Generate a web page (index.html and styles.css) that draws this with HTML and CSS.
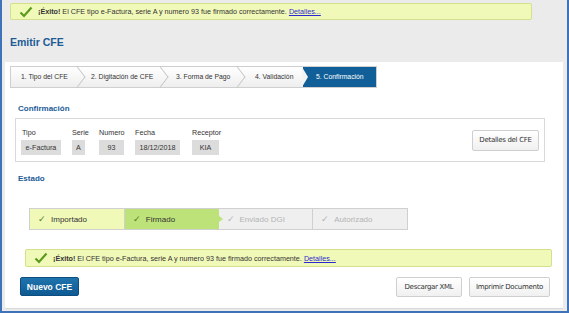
FILE: index.html
```html
<!DOCTYPE html>
<html lang="es">
<head>
    <meta charset="UTF-8">
    <title>Emitir CFE</title>
    <link rel="stylesheet" href="styles.css">
</head>
<body>
    <div class="frame">
        <div class="alert alert-top">
            <svg class="ok" width="14" height="12" viewBox="0 0 14 12"><polyline points="1.5,6.5 5,10 12.5,1.5" /></svg>
            <span><b>¡Éxito!</b> El CFE tipo e-Factura, serie A y numero 93 fue firmado correctamente. <a href="#">Detalles...</a></span>
        </div>
        <h1 class="title">Emitir CFE</h1>
        <div class="panel">
            <ul class="wizard">
                <li>1. Tipo del CFE</li>
                <li>2. Digitación de CFE</li>
                <li>3. Forma de Pago</li>
                <li>4. Validación</li>
                <li class="active">5. Confirmación</li>
            </ul>

            <h2 class="section">Confirmación</h2>
            <div class="summary">
                <div class="fields">
                    <div class="field f-tipo"><label>Tipo</label><span>e-Factura</span></div>
                    <div class="field f-serie"><label>Serie</label><span>A</span></div>
                    <div class="field f-num"><label>Numero</label><span>93</span></div>
                    <div class="field f-fecha"><label>Fecha</label><span>18/12/2018</span></div>
                    <div class="field f-rec"><label>Receptor</label><span>KIA</span></div>
                </div>
                <button class="btn">Detalles del CFE</button>
            </div>

            <h2 class="section section-estado">Estado</h2>
            <div class="status">
                <div class="step done"><i>&#10003;</i>Importado</div>
                <div class="step current"><i>&#10003;</i>Firmado</div>
                <div class="step todo"><i>&#10003;</i>Enviado DGI</div>
                <div class="step todo"><i>&#10003;</i>Autorizado</div>
            </div>

            <div class="alert alert-bottom">
                <svg class="ok" width="14" height="12" viewBox="0 0 14 12"><polyline points="1.5,6.5 5,10 12.5,1.5" /></svg>
                <span><b>¡Éxito!</b> El CFE tipo e-Factura, serie A y numero 93 fue firmado correctamente. <a href="#">Detalles...</a></span>
            </div>

            <div class="actions">
                <button class="btn btn-primary">Nuevo CFE</button>
                <div class="right">
                    <button class="btn">Descargar XML</button>
                    <button class="btn">Imprimir Documento</button>
                </div>
            </div>
        </div>
    </div>
</body>
</html>
```

FILE: styles.css
```css
html, body {
    margin: 0;
    padding: 0;
}
body {
    background: #ffffff;
    font-family: "Liberation Sans", Arial, sans-serif;
    font-size: 7.2px;
    color: #333;
}
.frame {
    box-sizing: border-box;
    width: 569px;
    height: 313px;
    border: 2px solid #3f72b8;
    border-top: none;
    background: #ebebeb;
    overflow: hidden;
    padding-top: 3px;
}
.alert {
    display: flex;
    align-items: center;
    gap: 5px;
    background: #f1f9b9;
    border: 1px solid #d4e08c;
    border-radius: 2px;
    height: 16px;
    padding: 0 8px;
    box-sizing: border-box;
}
.alert-top {
    margin-left: 8px;
    width: 522px;
    height: 17px;
}
.alert a {
    color: #2a2ad0;
}
.ok polyline {
    fill: none;
    stroke: #5b9a1d;
    stroke-width: 2.2;
}
.title {
    margin: 16px 0 0 8px;
    font-size: 10.5px;
    color: #1d5b97;
    font-weight: bold;
    height: 26px;
}
.panel {
    background: #fff;
    margin: 0 4px 0 3px;
    padding: 4px 10px 0 5px;
    height: 242px;
    border-bottom: 1px solid #d8d8d8;
}
.wizard {
    list-style: none;
    margin: 0;
    padding: 0;
    display: flex;
    width: 365px;
    height: 20px;
    border: 1px solid #cfcfcf;
    background: linear-gradient(#ffffff, #eeeeee);
    font-size: 6.8px;
}
.wizard li {
    position: relative;
    box-sizing: border-box;
    line-height: 20px;
    color: #333;
    white-space: nowrap;
}
.wizard li:nth-child(1) { width: 69px; padding-left: 10px; }
.wizard li:nth-child(2) { width: 83px; padding-left: 11px; }
.wizard li:nth-child(3) { width: 77px; padding-left: 13px; }
.wizard li:nth-child(4) { width: 63px; padding-left: 15px; }
.wizard li::after {
    content: "";
    position: absolute;
    right: -4px;
    top: 3px;
    width: 13px;
    height: 13px;
    border-top: 1px solid #c8c8c8;
    border-right: 1px solid #c8c8c8;
    transform: rotate(45deg) skew(8deg, 8deg);
}
.wizard li.active {
    flex: 1;
    background: #105f98;
    color: #fff;
    padding-left: 13px;
}
.wizard li.active::after,
.wizard li:nth-child(4)::after {
    display: none;
}
.wizard li.active::before {
    content: "";
    position: absolute;
    left: -1px;
    top: 0;
    border-style: solid;
    border-width: 10px 0 10px 6px;
    border-color: transparent transparent transparent #f3f3f3;
}
.section {
    margin: 0;
    font-size: 8px;
    font-weight: bold;
    color: #1d5b97;
    padding: 16px 0 0 8px;
    height: 14px;
}
.summary {
    margin-left: 5px;
    width: 530px;
    height: 44px;
    border: 1px solid #d9d9d9;
    display: flex;
    justify-content: space-between;
    align-items: center;
    padding: 0 5px;
    box-sizing: border-box;
}
.fields {
    display: flex;
    padding-top: 3px;
}
.field {
    display: flex;
    flex-direction: column;
    gap: 3px;
}
.field label {
    height: 9px;
}
.field span {
    background: #dcdcdc;
    height: 15px;
    line-height: 15px;
    text-align: center;
    color: #333;
}
.f-tipo { width: 40px; margin-right: 11px; }
.f-tipo label { padding-left: 1px; }
.f-serie { width: 13px; margin-right: 14px; }
.f-num { width: 25px; margin-right: 11px; }
.f-fecha { width: 45px; margin-right: 12px; }
.f-rec { width: 27px; }
.btn {
    font-family: "DejaVu Sans", Verdana, sans-serif;
    font-size: 7px;
    letter-spacing: -0.3px;
    color: #333;
    background: linear-gradient(#ffffff, #f0f0f0);
    border: 1px solid #cfcfcf;
    border-radius: 2px;
    height: 21px;
    padding: 0 8px;
    cursor: pointer;
}
.summary .btn {
    width: 67px;
    padding: 0;
}
.section-estado {
    padding-top: 12px;
}
.status {
    display: flex;
    margin: 20px 0 0 19px;
    width: 379px;
    height: 22px;
    border: 1px solid #d0d0d0;
    box-sizing: border-box;
    font-size: 8px;
}
.step {
    flex: 1;
    line-height: 20px;
    padding-left: 8px;
    position: relative;
    border-right: 1px solid #d0d0d0;
}
.step i {
    font-style: normal;
    font-size: 9px;
    color: #4f7d1c;
    margin-right: 5px;
}
.step:last-child {
    border-right: none;
}
.step.done {
    background: #f1f9b9;
    color: #333;
}
.step.current {
    background: #bde27a;
    color: #333;
    border-right: none;
}
.step.current::after {
    content: "";
    position: absolute;
    right: -4px;
    top: 7px;
    border-style: solid;
    border-width: 3px 0 3px 4px;
    border-color: transparent transparent transparent #bde27a;
    z-index: 1;
}
.step.todo {
    background: #efefef;
    color: #b4b4b4;
}
.step.todo i {
    color: #b4b4b4;
}
.alert-bottom {
    margin: 19px 0 0 15px;
    width: 527px;
    height: 18px;
}
.actions {
    display: flex;
    justify-content: space-between;
    align-items: flex-start;
    margin: 10px 0 0 10px;
    width: 530px;
}
.btn-primary {
    font-family: "Liberation Sans", Arial, sans-serif;
    font-size: 8.5px;
    font-weight: bold;
    letter-spacing: 0;
    color: #fff;
    background: linear-gradient(#1f73ad, #0f5a92);
    border: 1px solid #0d4e80;
    width: 59px;
    height: 19px;
    padding: 0;
}
.right {
    display: flex;
    gap: 7px;
}
.right .btn {
    height: 20px;
}
.right .btn:first-child { width: 66px; padding: 0; }
.right .btn:last-child { width: 81px; padding: 0; }
```
